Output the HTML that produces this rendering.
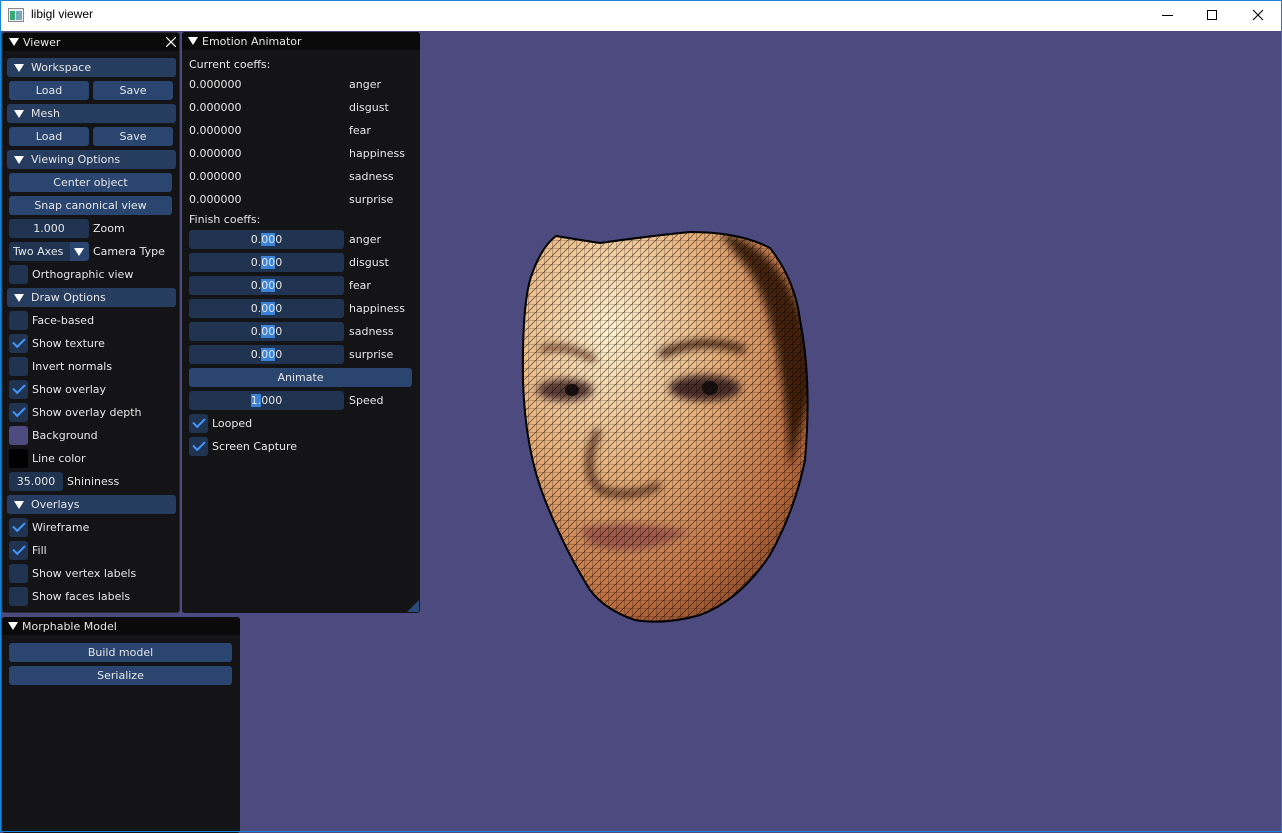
<!DOCTYPE html>
<html><head><meta charset="utf-8"><style>
*{margin:0;padding:0;box-sizing:border-box}
body{width:1282px;height:832px;position:relative;overflow:hidden;background:#4c4a7f;font-family:"DejaVu Sans","Liberation Sans",sans-serif;font-size:11px;color:#e6e6e6}
.a{position:absolute}
.win{border:1px solid #1883d7;position:absolute;left:0;top:0;width:1282px;height:832px;pointer-events:none}
.tb{left:0;top:0;width:1282px;height:31px;background:#fff;color:#000;font-size:12px}
.panel{background:#141416;border-radius:3px}
.ttl{background:#0a0a0b;height:18px;line-height:19px;padding-left:20px;color:#e6e6e6;border-radius:3px 3px 0 0}
.tri{position:absolute;left:6px;top:5px;width:0;height:0;border-left:5px solid transparent;border-right:5px solid transparent;border-top:8px solid #fff}
.hdr{background:#273d5f;height:19px;line-height:20px;border-radius:3px;padding-left:24px}
.hdr .tri{left:7px;top:6px}
.btn{background:#294570;height:19px;line-height:20px;text-align:center;border-radius:3px}
.fr{background:#203452;height:19px;line-height:20px;border-radius:3px;text-align:center}
.cb{background:#203452;width:19px;height:19px;border-radius:3px}
.lb{height:19px;line-height:20px}
.ck::after{content:"";position:absolute;left:4px;top:4px;width:10px;height:5px;border-left:2.5px solid #4296fa;border-bottom:2.5px solid #4296fa;transform:rotate(-45deg)}
.sel{background:#3a83d8}
</style></head><body>
<div class="a tb">
<svg class="a" style="left:8px;top:8px" width="16" height="14"><rect x="0.5" y="0.5" width="15" height="13" fill="#eee" stroke="#888"/><rect x="2" y="3" width="5" height="9" fill="#3a7"/><rect x="8" y="3" width="6" height="9" fill="#7ab"/></svg>
<div class="a" style="left:31px;top:7px;font-family:'Liberation Sans',sans-serif;font-size:12px">libigl viewer</div>
<div class="a" style="left:1162px;top:15px;width:11px;height:1px;background:#000"></div>
<div class="a" style="left:1207px;top:10px;width:10px;height:10px;border:1px solid #000"></div>
<svg class="a" style="left:1252px;top:9px" width="12" height="12"><path d="M1 1L11 11M11 1L1 11" stroke="#000" stroke-width="1.1"/></svg>
</div>

<svg class="a" style="left:0;top:0" width="1282" height="832">
<defs>
<radialGradient id="g" cx="0.3" cy="0.25" r="0.9"><stop offset="0" stop-color="#fff2d0"/><stop offset="0.4" stop-color="#e8b07a"/><stop offset="0.75" stop-color="#c07040"/><stop offset="1" stop-color="#6a3018"/></radialGradient>
<radialGradient id="h" cx="0.5" cy="0.5" r="0.5"><stop offset="0" stop-color="#200806" stop-opacity="0.9"/><stop offset="1" stop-color="#200806" stop-opacity="0"/></radialGradient>
<pattern id="m" width="8" height="8" patternUnits="userSpaceOnUse"><path d="M0 0H8M0 0V8M0 8L8 0" stroke="#000" stroke-width="0.6" fill="none" opacity="0.75"/></pattern>
<filter id="b"><feGaussianBlur stdDeviation="4"/></filter>
<clipPath id="c"><path id="fp" d="M556 236 Q580 240 600 243 Q650 236 690 232 Q740 232 770 248 Q795 280 800 320 Q812 380 805 460 Q795 510 770 555 Q740 600 700 615 Q665 625 635 620 Q605 610 590 590 Q565 550 545 500 Q525 450 523 380 Q522 310 530 280 Q540 248 556 236Z"/></clipPath>
</defs>
<g clip-path="url(#c)">
<rect x="520" y="230" width="300" height="400" fill="url(#g)"/>
<g filter="url(#b)">
<path d="M720 232 Q800 250 815 380 L790 470 Q780 300 740 260Z" fill="#2a0e06" opacity="0.85"/>
<ellipse cx="565" cy="390" rx="28" ry="11" fill="#5a3a36"/>
<ellipse cx="705" cy="388" rx="36" ry="13" fill="#4a2a26"/>
<path d="M540 350 Q565 342 595 360" stroke="#6a3a22" stroke-width="6" fill="none"/>
<path d="M660 355 Q700 335 745 350" stroke="#4a2518" stroke-width="8" fill="none"/>
<path d="M598 430 Q580 470 600 490 Q630 500 660 485" stroke="#5a3020" stroke-width="7" fill="none"/>
<path d="M580 528 Q630 518 690 532 Q640 560 590 545Z" fill="#a05848"/>
</g>
<ellipse cx="572" cy="390" rx="7" ry="6" fill="#1a1010"/>
<ellipse cx="710" cy="388" rx="8" ry="7" fill="#1a1010"/>
<rect x="520" y="230" width="300" height="400" fill="url(#m)"/>
</g>
<use href="#fp" fill="none" stroke="#000" stroke-width="2"/>
</svg>

<!-- Viewer panel -->
<div class="a panel" style="left:2px;top:32px;width:178px;height:581px;border:1px solid #2a2a33">
<div class="ttl" style="position:relative"><span class="tri"></span>Viewer
<svg class="a" style="right:3px;top:4px" width="10" height="10"><path d="M0 0L10 10M10 0L0 10" stroke="#fff" stroke-width="1.2"/></svg></div>
</div>
<div class="a hdr" style="left:7px;top:58px;width:169px"><span class="tri"></span>Workspace</div>
<div class="a btn" style="left:9px;top:81px;width:80px">Load</div>
<div class="a btn" style="left:93px;top:81px;width:80px">Save</div>
<div class="a hdr" style="left:7px;top:104px;width:169px"><span class="tri"></span>Mesh</div>
<div class="a btn" style="left:9px;top:127px;width:80px">Load</div>
<div class="a btn" style="left:93px;top:127px;width:80px">Save</div>
<div class="a hdr" style="left:7px;top:150px;width:169px"><span class="tri"></span>Viewing Options</div>
<div class="a btn" style="left:9px;top:173px;width:163px">Center object</div>
<div class="a btn" style="left:9px;top:196px;width:163px">Snap canonical view</div>
<div class="a fr" style="left:9px;top:219px;width:80px">1.000</div><div class="a lb" style="left:93px;top:219px">Zoom</div>
<div class="a fr" style="left:9px;top:242px;width:80px;text-align:left;padding-left:4px">Two Axes</div>
<div class="a btn" style="left:70px;top:242px;width:19px;border-radius:0 3px 3px 0"><span class="tri" style="left:4px;top:6px"></span></div>
<div class="a lb" style="left:93px;top:242px">Camera Type</div>
<div class="a cb" style="left:9px;top:265px"></div><div class="a lb" style="left:32px;top:265px">Orthographic view</div>
<div class="a hdr" style="left:7px;top:288px;width:169px"><span class="tri"></span>Draw Options</div>
<div class="a cb" style="left:9px;top:311px"></div><div class="a lb" style="left:32px;top:311px">Face-based</div>
<div class="a cb ck" style="left:9px;top:334px"></div><div class="a lb" style="left:32px;top:334px">Show texture</div>
<div class="a cb" style="left:9px;top:357px"></div><div class="a lb" style="left:32px;top:357px">Invert normals</div>
<div class="a cb ck" style="left:9px;top:380px"></div><div class="a lb" style="left:32px;top:380px">Show overlay</div>
<div class="a cb ck" style="left:9px;top:403px"></div><div class="a lb" style="left:32px;top:403px">Show overlay depth</div>
<div class="a cb" style="left:9px;top:426px;background:#4c4a7f"></div><div class="a lb" style="left:32px;top:426px">Background</div>
<div class="a cb" style="left:9px;top:449px;background:#000"></div><div class="a lb" style="left:32px;top:449px">Line color</div>
<div class="a fr" style="left:9px;top:472px;width:54px">35.000</div><div class="a lb" style="left:67px;top:472px">Shininess</div>
<div class="a hdr" style="left:7px;top:495px;width:169px"><span class="tri"></span>Overlays</div>
<div class="a cb ck" style="left:9px;top:518px"></div><div class="a lb" style="left:32px;top:518px">Wireframe</div>
<div class="a cb ck" style="left:9px;top:541px"></div><div class="a lb" style="left:32px;top:541px">Fill</div>
<div class="a cb" style="left:9px;top:564px"></div><div class="a lb" style="left:32px;top:564px">Show vertex labels</div>
<div class="a cb" style="left:9px;top:587px"></div><div class="a lb" style="left:32px;top:587px">Show faces labels</div>

<!-- Emotion panel -->
<div class="a panel" style="left:182px;top:32px;width:238px;height:581px">
<div class="ttl" style="position:relative"><span class="tri"></span>Emotion Animator</div>
<svg class="a" style="right:1px;bottom:1px" width="12" height="12"><path d="M12 0V12H0Z" fill="#2a4a78"/></svg>
</div>
<div class="a lb" style="left:189px;top:55px">Current coeffs:</div>
<div class="a lb" style="left:189px;top:75px">0.000000</div><div class="a lb" style="left:349px;top:75px">anger</div>
<div class="a lb" style="left:189px;top:98px">0.000000</div><div class="a lb" style="left:349px;top:98px">disgust</div>
<div class="a lb" style="left:189px;top:121px">0.000000</div><div class="a lb" style="left:349px;top:121px">fear</div>
<div class="a lb" style="left:189px;top:144px">0.000000</div><div class="a lb" style="left:349px;top:144px">happiness</div>
<div class="a lb" style="left:189px;top:167px">0.000000</div><div class="a lb" style="left:349px;top:167px">sadness</div>
<div class="a lb" style="left:189px;top:190px">0.000000</div><div class="a lb" style="left:349px;top:190px">surprise</div>
<div class="a lb" style="left:189px;top:210px">Finish coeffs:</div>
<div class="a fr" style="left:189px;top:230px;width:155px">0.<span class="sel">00</span>0</div><div class="a lb" style="left:349px;top:230px">anger</div>
<div class="a fr" style="left:189px;top:253px;width:155px">0.<span class="sel">00</span>0</div><div class="a lb" style="left:349px;top:253px">disgust</div>
<div class="a fr" style="left:189px;top:276px;width:155px">0.<span class="sel">00</span>0</div><div class="a lb" style="left:349px;top:276px">fear</div>
<div class="a fr" style="left:189px;top:299px;width:155px">0.<span class="sel">00</span>0</div><div class="a lb" style="left:349px;top:299px">happiness</div>
<div class="a fr" style="left:189px;top:322px;width:155px">0.<span class="sel">00</span>0</div><div class="a lb" style="left:349px;top:322px">sadness</div>
<div class="a fr" style="left:189px;top:345px;width:155px">0.<span class="sel">00</span>0</div><div class="a lb" style="left:349px;top:345px">surprise</div>
<div class="a btn" style="left:189px;top:368px;width:223px">Animate</div>
<div class="a fr" style="left:189px;top:391px;width:155px"><span class="sel">1.</span>000</div><div class="a lb" style="left:349px;top:391px">Speed</div>
<div class="a cb ck" style="left:189px;top:414px"></div><div class="a lb" style="left:212px;top:414px">Looped</div>
<div class="a cb ck" style="left:189px;top:437px"></div><div class="a lb" style="left:212px;top:437px">Screen Capture</div>

<!-- Morphable -->
<div class="a panel" style="left:2px;top:617px;width:238px;height:216px">
<div class="ttl" style="position:relative"><span class="tri"></span>Morphable Model</div>
</div>
<div class="a btn" style="left:9px;top:643px;width:223px">Build model</div>
<div class="a btn" style="left:9px;top:666px;width:223px">Serialize</div>
<div class="win"></div>
</body></html>
